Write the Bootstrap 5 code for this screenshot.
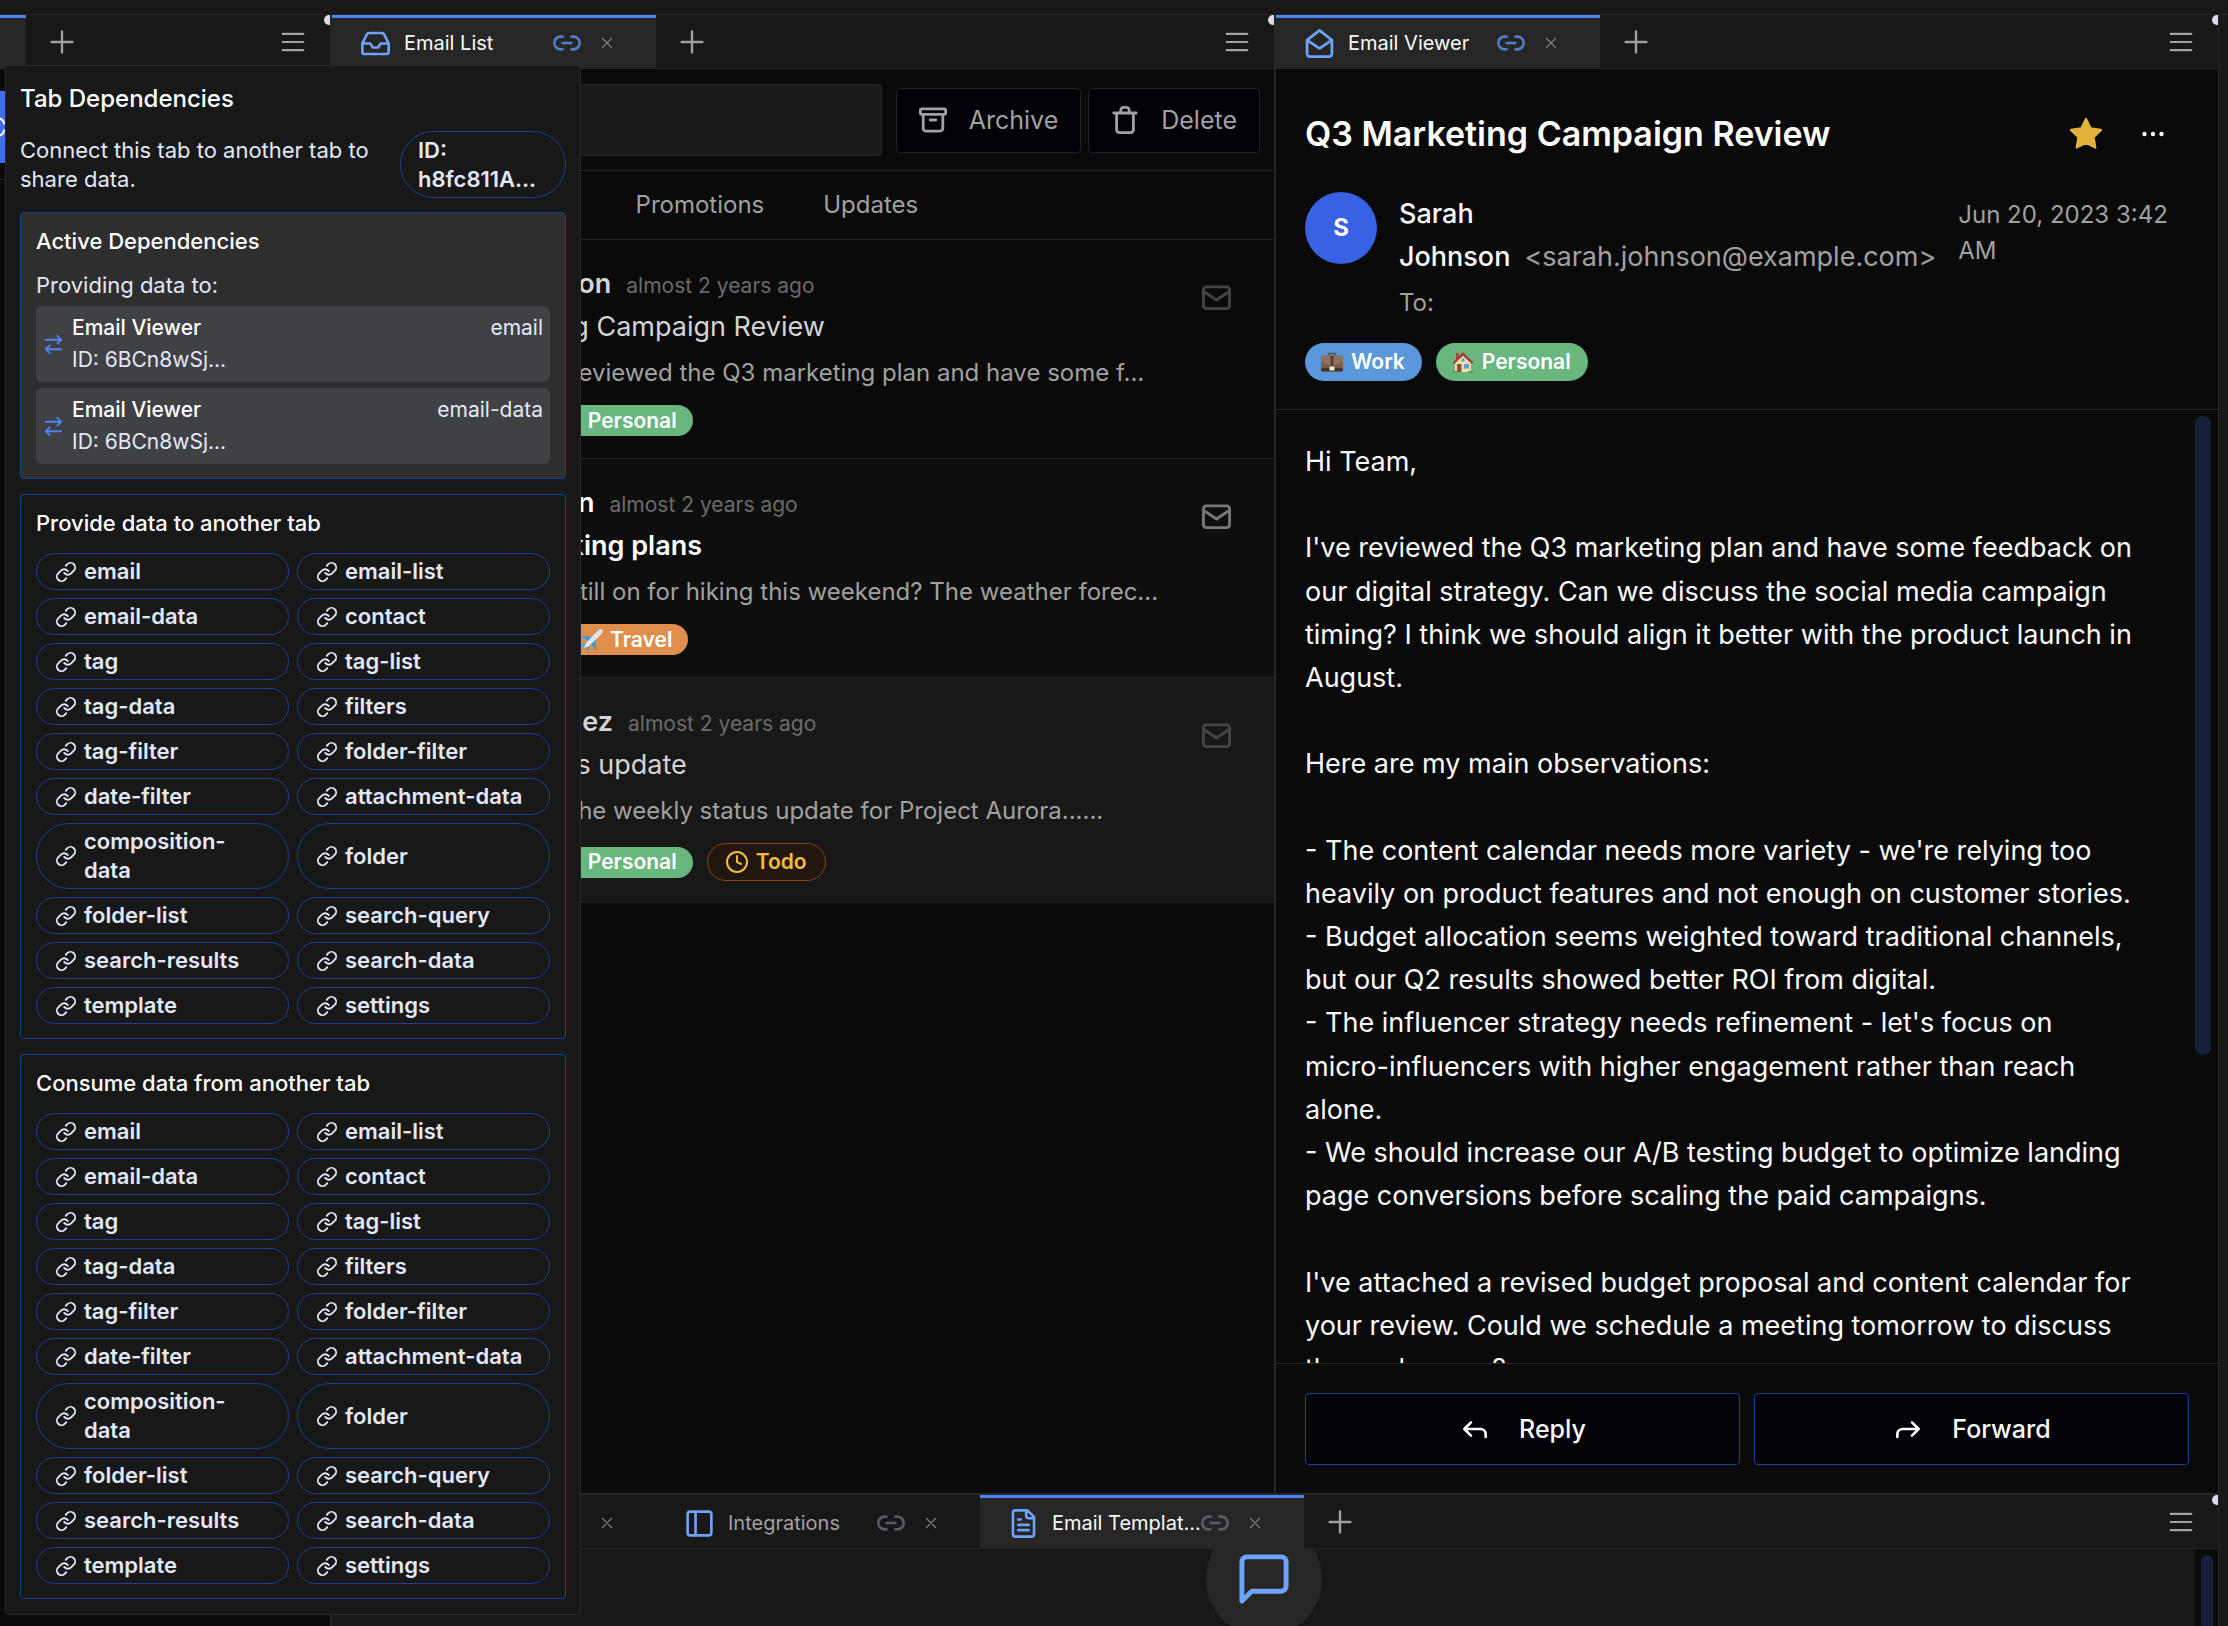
<!DOCTYPE html>
<html lang="en" data-bs-theme="dark">
<head>
<meta charset="utf-8">
<meta name="viewport" content="width=device-width, initial-scale=1">
<title>Mail workspace</title>
<link href="https://cdn.jsdelivr.net/npm/bootstrap@5.3.0/dist/css/bootstrap.min.css" rel="stylesheet">
<style>
:root{--pane:#0a0a0a;--bar:#181818;--tab:#262626;--line:#262626;--blue:#4f83ee;--icon:#6ea3f8;--edge:#1f3f95;--soft:#e2e8f8;--mute:#a1a1a1;--dim:#6b6b6b}
body{font-family:Inter,"Liberation Sans",sans-serif;font-size:24px;line-height:36px;background:var(--pane);color:#fafafa;height:100vh;overflow:hidden}
button{color:inherit;font:inherit}
.ico{fill:none;stroke:currentColor;stroke-width:2;stroke-linecap:round;stroke-linejoin:round;flex:none}
.topstrip{height:15px;background:var(--bar);border-bottom:1px solid var(--line)}
.sidepane{width:332px;border-right:2px solid var(--line)}
.pane{flex:1 1 0;min-width:0}
.gutter{width:10px;background:var(--bar);border-left:1px solid var(--line)}
.tabbar{height:54px;background:var(--bar);border-bottom:1px solid var(--line);position:relative;flex:none}
.tabbar::after{content:"";position:absolute;right:0;top:0;width:6px;height:10px;border-radius:6px 0 0 6px;background:#dadae4}
.tabitem{width:324px;height:54px;padding:0 43px 0 29px;font-size:20px;line-height:28px;color:var(--mute);border-top:3px solid transparent}
.tabitem.current{background:var(--tab);border-top-color:var(--blue);color:#fafafa}
.tabitem.stub{width:26px;padding:0}
.tabitem .kind{color:var(--icon);margin-right:14px}
.tabitem .tabname{flex:1;min-width:0;white-space:nowrap;overflow:hidden}
.tabbtn{background:none;border:0;padding:0;display:flex;color:var(--mute)}
.tabbtn.chain{color:#5a5c68}
.tabbtn.linked{color:#547bc4}
.tabbtn.shut{color:#7c7c7c;margin-left:20px}
.tabbtn.shut .ico{stroke-width:1.300}
.tabbtn.plus{margin-left:22px}
.tabbtn.lines{margin:0 24px 0 auto}
.tabbtn.more{margin:0 24px 0 37px}
.sideblock{height:72px;width:300px;margin-top:22px;background:#3f6ee8;border:0;text-align:left;padding:0;color:#fff}
.midpane{border-right:2px solid var(--line)}
.toolrow{padding:15px 14px 14px;border-bottom:1px solid var(--line);gap:7px}
.searchbox{height:72px;background:var(--bar);border:1px solid var(--line);border-radius:4px;margin-right:7px;color:#fafafa;min-width:0}
.toolbtn{height:65px;padding:0 22px;background:#020107;border:1px solid #232326;border-radius:4px;color:var(--mute);font-size:25px;gap:22px}
.folders{height:69px;padding-left:29px;gap:59px;border-bottom:1px solid var(--line)}
.folders a{color:var(--mute);text-decoration:none}
.mailrow{padding:22px 43px 22px 84px;border-bottom:1px solid var(--line);color:#d4d4d4}
.mailrow.unread{background:#0e0e0e;color:#fff}
.mailrow.picked{background:var(--bar);border-bottom:0}
.who,.subject{font-size:27px;line-height:43px}
.who{font-weight:600;height:43px}
.when{font-size:21px;line-height:21px;color:var(--dim);margin-left:15px}
.unread .subject{font-weight:600}
.preview{line-height:38px;margin-top:6px;color:var(--mute)}
.tagset{gap:14px;margin-top:13px}
.state{color:#444;margin-top:22px}
.unread .state{color:#777}
.chip{display:inline-flex;align-items:center;gap:6px;height:31px;padding:0 16px 0 14px;border-radius:16px;font-size:21px;line-height:30px;font-weight:600;color:#fff}
.chip.big{height:38px;padding:0 17px 0 15px;gap:7px;border-radius:19px}
.chip.work{background:#5b97db}
.chip.home{background:#69b77f}
.chip.trip{background:#e08e4c}
.chip.todo{height:38px;padding:0 18px;gap:8px;border-radius:19px;background:#21170f;border:1px solid #8a4319;color:#f2bc3e}
.viewhead{padding:43px 29px 28px;border-bottom:1px solid var(--line)}
.viewtitle{font-size:34px;line-height:44px;font-weight:600;margin:0}
.fromrow{margin-top:36px;gap:22px}
.face{width:72px;height:72px;border-radius:50%;background:#3862e3;font-weight:700;flex:none}
.sender{font-size:27px;line-height:43px;gap:14px}
.sender strong{font-weight:500;width:min-content}
.sender span{color:var(--mute)}
.torow{margin-top:7px;color:var(--mute)}
.stamp{width:231px;flex:none;color:var(--mute);margin-top:5px}
.viewtags{gap:14px;margin-top:22px}
.letter{padding:30px 58px 0 29px;font-size:27px;line-height:1.6;white-space:pre-wrap;min-height:0;overflow:hidden}
.rail{width:23px;flex:none}
.rail .thumb{width:16px;height:67%;margin-top:6px;border-radius:8px;background:#162139}
.viewfoot{padding:29px 29px 28px;gap:14px;border-top:1px solid var(--line)}
.footbtn{height:72px;background:#020107;border:1px solid var(--edge);border-radius:4px;font-size:25px;font-weight:500;color:#fafafa;gap:28px}
.lowpane{height:133px;flex:none;border-top:2px solid var(--line)}
.lowbody{background:var(--bar);overflow:hidden}
.bubble{width:116px;height:116px;margin-top:-28px;border-radius:50%;background:var(--tab);color:var(--icon);border:0;flex:none}
.lowrail{width:23px;background:var(--pane);padding-left:6px}
.lowrail div{width:12px;height:110px;margin-top:6px;border-radius:6px;background:#162139}
.popdeps{position:absolute;left:5px;top:65px;width:576px;padding:15px 14px 15px;background:var(--bar);border:1px solid #2a2a2a;border-radius:4px;z-index:5;color:#fff}
.popdeps h2{font-size:24px;line-height:36px;font-weight:500;margin:0 0 14px}
.popdeps h3{font-size:22px;line-height:29px;font-weight:500;margin:0 0 15px}
.poptext{font-size:22px;line-height:29px;color:var(--soft)}
.popintro{width:360px}
.idpill{width:166px;height:67px;padding:4px 17px;border:1px solid var(--edge);font-size:22px;line-height:29px;font-weight:600;color:var(--soft)}
.depbox{border:1px solid var(--edge);border-radius:4px;padding:14px 15px;margin-top:15px}
.depbox.live{background:#2e2e2e;margin-top:14px}
.deprow{background:#404145;border-radius:6px;padding:6px 7px;font-size:21px;line-height:32px;color:var(--soft);margin-top:6px}
.deprow b{font-weight:500;color:#fff;display:block}
.deprow .swap{color:var(--blue);margin:0 9px 0 1px}
.pillgrid{display:grid;grid-template-columns:1fr 1fr;gap:8px}
.pillgrid button{display:flex;align-items:center;gap:7px;min-height:37px;padding:3px 20px 3px 18px;background:none;border:1px solid var(--edge);border-radius:34px;font-size:22px;line-height:29px;font-weight:600;color:var(--soft);text-align:left;white-space:nowrap}
.pillgrid button span{white-space:normal;margin-right:-6px}
.pillgrid button.twoline span{width:min-content}
</style>
<script src="https://cdn.jsdelivr.net/npm/bootstrap@5.3.0/dist/js/bootstrap.bundle.min.js"></script>
</head>
<body class="d-flex flex-column">
<svg class="d-none" aria-hidden="true">
<symbol id="i-link" viewBox="0 0 24 24"><path d="M10 13a5 5 0 0 0 7.54.54l3-3a5 5 0 0 0-7.07-7.07l-1.72 1.71M14 11a5 5 0 0 0-7.54-.54l-3 3a5 5 0 0 0 7.07 7.07l1.71-1.71"/></symbol>
<symbol id="i-chain" viewBox="1 1 22 22"><path d="M8.500 17H7A5 5 0 0 1 7 7h1.500M15.500 7H17a5 5 0 1 1 0 10h-1.500M8.500 12h7"/></symbol>
<symbol id="i-plus" viewBox="0 0 24 24"><path d="M12 3v18M3 12h18"/></symbol>
<symbol id="i-lines" viewBox="0 0 24 24"><path d="M2.500 4.500h19M2.500 12h19M2.500 19.500h19"/></symbol>
<symbol id="i-x" viewBox="0 0 12 12"><path d="M1.500 1.500l9 9M10.500 1.500l-9 9"/></symbol>
<symbol id="i-inbox" viewBox="1 1 22 22"><path d="M22 12h-6l-2 3h-4l-2-3H2"/><path d="M5.450 5.110 2 12v6a2 2 0 0 0 2 2h16a2 2 0 0 0 2-2v-6l-3.450-6.890A2 2 0 0 0 16.760 4H7.240a2 2 0 0 0-1.790 1.110z"/></symbol>
<symbol id="i-open" viewBox="2 1 20 21"><path d="M3 9l9 6 9-6-9-7-9 7M21 9v10a2 2 0 0 1-2 2H5a2 2 0 0 1-2-2V9"/></symbol>
<symbol id="i-archive" viewBox="2 2 20 20"><rect x="3" y="4" width="18" height="4" rx="1"/><path d="M5 8v10a2 2 0 0 0 2 2h10a2 2 0 0 0 2-2V8M10 12h4"/></symbol>
<symbol id="i-trash" viewBox="2 2 20 20"><path d="M4 7h16M6 7v12a2 2 0 0 0 2 2h8a2 2 0 0 0 2-2V7M9 7V5a2 2 0 0 1 2-2h2a2 2 0 0 1 2 2v2"/></symbol>
<symbol id="i-mail" viewBox="2 2 20 20"><rect x="3" y="4" width="18" height="15" rx="2"/><path d="M3 7l9 6 9-6"/></symbol>
<symbol id="i-file" viewBox="1 1 22 22"><path d="M14 2v4a2 2 0 0 0 2 2h4M15 2H6a2 2 0 0 0-2 2v16a2 2 0 0 0 2 2h12a2 2 0 0 0 2-2V7zM10 9H8M16 13H8M16 17H8"/></symbol>
<symbol id="i-side" viewBox="1 1 22 22"><rect x="3" y="3" width="18" height="18" rx="2"/><path d="M9 3v18"/></symbol>
<symbol id="i-clock" viewBox="1 1 22 22"><circle cx="12" cy="12" r="10"/><path d="M12 6v6l4 2"/></symbol>
<symbol id="i-chat" viewBox="1 1 22 22"><path d="M21 15a2 2 0 0 1-2 2H7l-4 4V5a2 2 0 0 1 2-2h14a2 2 0 0 1 2 2z"/></symbol>
<symbol id="i-reply" viewBox="0 0 24 24"><path d="M20 18v-2a4 4 0 0 0-4-4H4M9 17l-5-5 5-5"/></symbol>
<symbol id="i-forward" viewBox="0 0 24 24"><path d="M4 18v-2a4 4 0 0 1 4-4h12M15 17l5-5-5-5"/></symbol>
<symbol id="i-swap" viewBox="2 2 20 20"><path d="M16 3l4 4-4 4M20 7H4M8 21l-4-4 4-4M4 17h16"/></symbol>
<symbol id="e-work" viewBox="0 0 24 24"><path d="M9 6V3.500h6V6" fill="none" stroke="#5b5350" stroke-width="1.600"/><rect x="1" y="5.500" width="22" height="16" rx="2" fill="#7b5f4c"/><path d="M1 8a2 2 0 0 1 2-2.500h18A2 2 0 0 1 23 8v3q-11 8-22 0z" fill="#8d7460"/><path d="M1 18h22v1.500a2 2 0 0 1-2 2H3a2 2 0 0 1-2-2z" fill="#4a352a"/><rect x="10.500" y="5.500" width="3" height="11" fill="#5a4436"/><rect x="9.500" y="16.500" width="5" height="4" rx="1" fill="#f3ead9"/></symbol>
<symbol id="e-home" viewBox="0 0 24 24"><path d="M4 11 12 4l8 7v11H4z" fill="#f0dcae"/><path d="M5 3h3v5L5 10z" fill="#a8463a"/><path d="M1.500 12.500 12 2l10.500 10.500-1.800 1.500L12 5.800 3.300 14z" fill="#9c4436"/><rect x="6" y="14" width="4.500" height="8" fill="#8a5536"/><rect x="13" y="14" width="5" height="4.500" fill="#5c9fd2"/><rect x="10.500" y="8.500" width="3" height="3" fill="#5c9fd2"/><path d="M2 21h4v1.800H2zM17 21h5v1.800h-5z" fill="#5c9b3e"/></symbol>
<symbol id="e-trip" viewBox="0 0 24 24"><path d="M13 9 3 7.500 1.500 9l8 4.500zM15 11l1.500 10-1.500 1.500-4.500-8zM6.500 15 2 15.500 1 17l4.500 1.500L7 23l1.500-1 .5-4.500z" fill="#3d9ad6"/><path d="M22.500 1.500c-2-1-4 .5-5.500 2L5.500 15.500 4 20l4.500-1.500L20.500 7c1.500-1.500 3-3.500 2-5.500z" fill="#dfe7ee"/></symbol>
</svg>

<div class="topstrip flex-shrink-0"></div>
<div class="d-flex flex-grow-1" style="min-height:0">
  <aside class="sidepane flex-shrink-0 overflow-hidden">
    <div class="tabbar d-flex align-items-center">
      <div class="tabitem current stub"></div>
      <button class="tabbtn plus" aria-label="New tab"><svg class="ico" width="28" height="28"><use href="#i-plus"/></svg></button>
      <button class="tabbtn lines" aria-label="Menu"><svg class="ico" width="26" height="26"><use href="#i-lines"/></svg></button>
    </div>
    <button class="sideblock d-flex align-items-center" aria-label="Compose"><svg class="ico" width="5" height="24" viewBox="0 0 5 24"><path d="M0 3.500q4 2 4 5M0 20.500q4-2 4-5"/></svg></button>
    <hr class="border-secondary mb-0">
  </aside>

  <div class="d-flex flex-column flex-grow-1" style="min-width:0">
    <div class="d-flex flex-grow-1" style="min-height:0">
      <section class="pane midpane d-flex flex-column">
        <div class="tabbar d-flex align-items-center">
          <div class="tabitem current d-flex align-items-center"><svg class="ico kind" width="29" height="29"><use href="#i-inbox"/></svg><span class="tabname">Email List</span><button class="tabbtn linked" aria-label="Dependencies"><svg class="ico" width="28" height="28"><use href="#i-chain"/></svg></button><button class="tabbtn shut" aria-label="Close"><svg class="ico" width="12" height="12"><use href="#i-x"/></svg></button></div>
          <button class="tabbtn plus" aria-label="New tab"><svg class="ico" width="28" height="28"><use href="#i-plus"/></svg></button>
          <button class="tabbtn lines" aria-label="Menu"><svg class="ico" width="26" height="26"><use href="#i-lines"/></svg></button>
        </div>
        <div class="toolrow d-flex align-items-center">
          <input class="searchbox flex-grow-1" type="search" aria-label="Search mail">
          <button class="toolbtn d-flex align-items-center"><svg class="ico" width="28" height="28"><use href="#i-archive"/></svg>Archive</button>
          <button class="toolbtn d-flex align-items-center"><svg class="ico" width="28" height="28"><use href="#i-trash"/></svg>Delete</button>
        </div>
        <nav class="folders d-flex align-items-center"><a href="#">Primary</a><a href="#">Social</a><a href="#">Promotions</a><a href="#">Updates</a></nav>

        <article class="mailrow d-flex">
          <div class="flex-grow-1">
            <div class="who">Sarah Johnson<span class="when fw-normal">almost 2 years ago</span></div>
            <div class="subject">Q3 Marketing Campaign Review</div>
            <div class="preview text-nowrap">Hi Team, I've reviewed the Q3 marketing plan and have some f...</div>
            <div class="tagset d-flex align-items-center"><span class="chip work"><svg width="24" height="24"><use href="#e-work"/></svg>Work</span><span class="chip home"><svg width="24" height="24"><use href="#e-home"/></svg>Personal</span></div>
          </div>
          <svg class="ico state" width="29" height="29"><use href="#i-mail"/></svg>
        </article>
        <article class="mailrow unread d-flex">
          <div class="flex-grow-1">
            <div class="who">Michael Chen<span class="when fw-normal">almost 2 years ago</span></div>
            <div class="subject">Weekend hiking plans</div>
            <div class="preview text-nowrap">Hey!! Are we still on for hiking this weekend? The weather forec...</div>
            <div class="tagset d-flex align-items-center"><span class="chip home">Adventure</span><span class="chip trip"><svg width="24" height="24"><use href="#e-trip"/></svg>Travel</span></div>
          </div>
          <svg class="ico state" width="29" height="29"><use href="#i-mail"/></svg>
        </article>
        <article class="mailrow picked d-flex">
          <div class="flex-grow-1">
            <div class="who">Alex Rodriguez<span class="when fw-normal">almost 2 years ago</span></div>
            <div class="subject">Project status update</div>
            <div class="preview text-nowrap">Hello, here is the weekly status update for Project Aurora......</div>
            <div class="tagset d-flex align-items-center"><span class="chip work"><svg width="24" height="24"><use href="#e-work"/></svg>Work</span><span class="chip home"><svg width="24" height="24"><use href="#e-home"/></svg>Personal</span><span class="chip todo"><svg class="ico" width="22" height="22"><use href="#i-clock"/></svg>Todo</span></div>
          </div>
          <svg class="ico state" width="29" height="29"><use href="#i-mail"/></svg>
        </article>
      </section>

      <section class="pane d-flex flex-column">
        <div class="tabbar d-flex align-items-center">
          <div class="tabitem current d-flex align-items-center"><svg class="ico kind" width="29" height="29"><use href="#i-open"/></svg><span class="tabname">Email Viewer</span><button class="tabbtn linked" aria-label="Dependencies"><svg class="ico" width="28" height="28"><use href="#i-chain"/></svg></button><button class="tabbtn shut" aria-label="Close"><svg class="ico" width="12" height="12"><use href="#i-x"/></svg></button></div>
          <button class="tabbtn plus" aria-label="New tab"><svg class="ico" width="28" height="28"><use href="#i-plus"/></svg></button>
          <button class="tabbtn lines" aria-label="Menu"><svg class="ico" width="26" height="26"><use href="#i-lines"/></svg></button>
        </div>
        <header class="viewhead">
          <div class="d-flex align-items-center">
            <h1 class="viewtitle flex-grow-1">Q3 Marketing Campaign Review</h1>
            <button class="tabbtn" aria-label="Star"><svg width="36" height="36" viewBox="0 0 24 24"><path fill="#e3b23c" stroke="#e3b23c" stroke-width="1.500" stroke-linejoin="round" d="M12 2l3.090 6.260L22 9.270l-5 4.870 1.180 6.880L12 17.770l-6.180 3.250L7 14.140 2 9.270l6.910-1.010z"/></svg></button>
            <button class="tabbtn more" aria-label="More"><svg width="24" height="24" viewBox="0 0 24 24"><g fill="#fafafa"><circle cx="3.500" cy="12" r="2.200"/><circle cx="12" cy="12" r="2.200"/><circle cx="20.500" cy="12" r="2.200"/></g></svg></button>
          </div>
          <div class="fromrow d-flex">
            <div class="face d-flex align-items-center justify-content-center">S</div>
            <div class="flex-grow-1">
              <div class="sender d-flex align-items-end"><strong>Sarah Johnson</strong><span>&lt;sarah.johnson@example.com&gt;</span></div>
              <div class="torow">To:</div>
            </div>
            <div class="stamp">Jun 20, 2023 3:42 AM</div>
          </div>
          <div class="viewtags d-flex"><span class="chip big work"><svg width="24" height="24"><use href="#e-work"/></svg>Work</span><span class="chip big home"><svg width="24" height="24"><use href="#e-home"/></svg>Personal</span></div>
        </header>
        <div class="d-flex flex-grow-1" style="min-height:0">
          <div class="letter flex-grow-1">Hi Team,

I've reviewed the Q3 marketing plan and have some feedback on our digital strategy. Can we discuss the social media campaign timing? I think we should align it better with the product launch in August.

Here are my main observations:

- The content calendar needs more variety - we're relying too heavily on product features and not enough on customer stories.
- Budget allocation seems weighted toward traditional channels, but our Q2 results showed better ROI from digital.
- The influencer strategy needs refinement - let's focus on micro-influencers with higher engagement rather than reach alone.
- We should increase our A/B testing budget to optimize landing page conversions before scaling the paid campaigns.

I've attached a revised budget proposal and content calendar for your review. Could we schedule a meeting tomorrow to discuss these changes?</div>
          <div class="rail"><div class="thumb"></div></div>
        </div>
        <footer class="viewfoot d-flex">
          <button class="footbtn d-flex flex-fill w-50 align-items-center justify-content-center"><svg class="ico" width="32" height="32"><use href="#i-reply"/></svg>Reply</button>
          <button class="footbtn d-flex flex-fill w-50 align-items-center justify-content-center"><svg class="ico" width="32" height="32"><use href="#i-forward"/></svg>Forward</button>
        </footer>
      </section>
    </div>

    <section class="lowpane d-flex flex-column">
      <div class="tabbar d-flex align-items-center">
        <div class="tabitem d-flex align-items-center"><svg class="ico kind" width="29" height="29"><use href="#i-inbox"/></svg><span class="tabname">Contacts</span><button class="tabbtn chain" aria-label="Dependencies"><svg class="ico" width="28" height="28"><use href="#i-chain"/></svg></button><button class="tabbtn shut" aria-label="Close"><svg class="ico" width="12" height="12"><use href="#i-x"/></svg></button></div>
        <div class="tabitem d-flex align-items-center"><svg class="ico kind" width="29" height="29"><use href="#i-side"/></svg><span class="tabname">Integrations</span><button class="tabbtn chain" aria-label="Dependencies"><svg class="ico" width="28" height="28"><use href="#i-chain"/></svg></button><button class="tabbtn shut" aria-label="Close"><svg class="ico" width="12" height="12"><use href="#i-x"/></svg></button></div>
        <div class="tabitem current d-flex align-items-center"><svg class="ico kind" width="29" height="29"><use href="#i-file"/></svg><span class="tabname">Email Templat...</span><button class="tabbtn chain" aria-label="Dependencies"><svg class="ico" width="28" height="28"><use href="#i-chain"/></svg></button><button class="tabbtn shut" aria-label="Close"><svg class="ico" width="12" height="12"><use href="#i-x"/></svg></button></div>
        <button class="tabbtn plus" aria-label="New tab"><svg class="ico" width="28" height="28"><use href="#i-plus"/></svg></button>
        <button class="tabbtn lines" aria-label="Menu"><svg class="ico" width="26" height="26"><use href="#i-lines"/></svg></button>
      </div>
      <div class="lowbody d-flex flex-grow-1">
        <div class="flex-grow-1 d-flex justify-content-center"><button class="bubble d-flex align-items-center justify-content-center" aria-label="Chat"><svg class="ico" width="54" height="54"><use href="#i-chat"/></svg></button></div>
        <div class="lowrail"><div></div></div>
      </div>
    </section>
  </div>
  <div class="gutter flex-shrink-0"></div>
</div>

<div class="popdeps" role="dialog" aria-label="Tab Dependencies">
  <h2>Tab Dependencies</h2>
  <div class="d-flex align-items-center justify-content-between">
    <div class="poptext popintro">Connect this tab to another tab to share data.</div>
    <div class="idpill rounded-pill">ID: h8fc811A...</div>
  </div>
  <div class="depbox live">
    <h3>Active Dependencies</h3>
    <div class="poptext">Providing data to:</div>
    <div class="deprow d-flex align-items-center"><svg class="ico swap" width="19" height="19"><use href="#i-swap"/></svg><div class="flex-grow-1"><b>Email Viewer</b>ID: 6BCn8wSj...</div><div class="align-self-start">email</div></div>
    <div class="deprow d-flex align-items-center"><svg class="ico swap" width="19" height="19"><use href="#i-swap"/></svg><div class="flex-grow-1"><b>Email Viewer</b>ID: 6BCn8wSj...</div><div class="align-self-start">email-data</div></div>
  </div>
  <div class="depbox">
    <h3>Provide data to another tab</h3>
    <div class="pillgrid" data-pills></div>
  </div>
  <div class="depbox">
    <h3>Consume data from another tab</h3>
    <div class="pillgrid" data-pills></div>
  </div>
</div>
<script>
const kinds = ["email","email-list","email-data","contact","tag","tag-list","tag-data","filters","tag-filter","folder-filter","date-filter","attachment-data","composition-data","folder","folder-list","search-query","search-results","search-data","template","settings"];
document.querySelectorAll("[data-pills]").forEach(grid => {
  grid.innerHTML = kinds.map(k => `<button type="button"${k.length > 15 ? ' class="twoline"' : ""}><svg class="ico" width="22" height="22"><use href="#i-link"/></svg><span>${k}</span></button>`).join("");
});
</script>
</body>
</html>
